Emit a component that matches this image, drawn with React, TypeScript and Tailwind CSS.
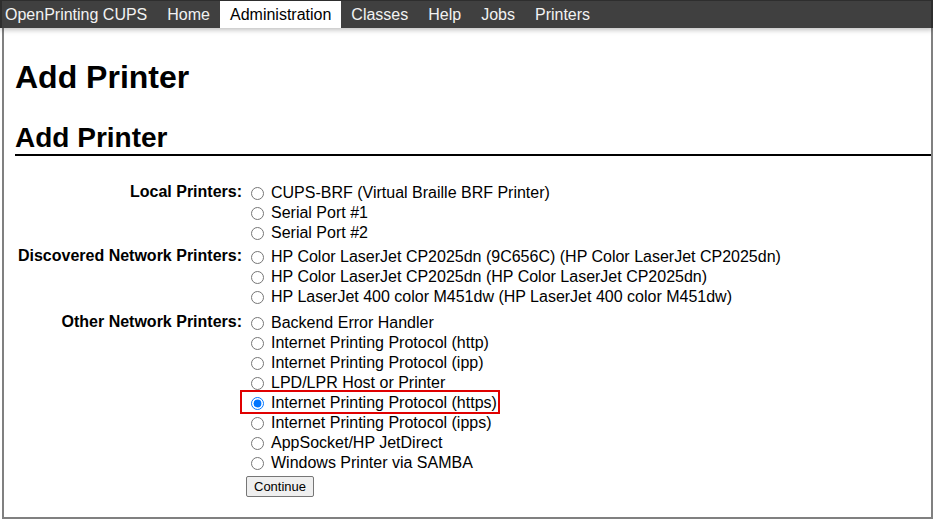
import React from 'react';

const groups = [
  {
    label: 'Local Printers:',
    gap: 'mt-0',
    options: ['CUPS-BRF (Virtual Braille BRF Printer)', 'Serial Port #1', 'Serial Port #2'],
  },
  {
    label: 'Discovered Network Printers:',
    gap: 'mt-[4px]',
    options: [
      'HP Color LaserJet CP2025dn (9C656C) (HP Color LaserJet CP2025dn)',
      'HP Color LaserJet CP2025dn (HP Color LaserJet CP2025dn)',
      'HP LaserJet 400 color M451dw (HP LaserJet 400 color M451dw)',
    ],
  },
  {
    label: 'Other Network Printers:',
    gap: 'mt-[6px]',
    options: [
      'Backend Error Handler',
      'Internet Printing Protocol (http)',
      'Internet Printing Protocol (ipp)',
      'LPD/LPR Host or Printer',
      'Internet Printing Protocol (https)',
      'Internet Printing Protocol (ipps)',
      'AppSocket/HP JetDirect',
      'Windows Printer via SAMBA',
    ],
  },
];

const navItems = ['Home', 'Administration', 'Classes', 'Help', 'Jobs', 'Printers'];

export default function App() {
  return (
    <div className="w-[933px] h-[520px] bg-white overflow-hidden font-['Liberation_Sans',Arial,sans-serif] text-black">
      <nav className="relative z-10 h-[28px] flex bg-[#404040] border-t-[1px] border-x-2 border-[#2e2e2e] shadow-[0_2px_5px_rgba(0,0,0,0.25)] text-[16px] leading-[27px]">
        <span className="pl-[3px] pr-[10px] text-[#f2f2f2]">OpenPrinting CUPS</span>
        {navItems.map(item => (
          <span
            key={item}
            className={
              item === 'Administration'
                ? 'px-[10px] bg-white text-black'
                : 'px-[10px] text-[#f2f2f2]'
            }
          >
            {item}
          </span>
        ))}
      </nav>

      <div className="ml-[2px] h-[491px] border-l-2 border-r-2 border-b-2 border-[#808080] pl-[11px] pt-[31px]">
        <h1 className="text-[32px] leading-[36px] font-bold">Add Printer</h1>
        <h2 className="mt-[27px] text-[28px] leading-[32px] font-bold border-b-2 border-black">Add Printer</h2>

        <div className="mt-[27px] text-[16px]">
          {groups.map((group, gi) => (
            <div key={group.label} className={`flex ${group.gap}`}>
              <div className="w-[227px] text-right font-bold leading-[18px]">{group.label}</div>
              <div className="pl-[4px]">
                {group.options.map(opt => {
                  const checked = opt === 'Internet Printing Protocol (https)';
                  return (
                    <div key={opt} className="relative h-[20px] flex items-center whitespace-nowrap">
                      {checked && (
                        <div className="absolute left-[-6px] top-[-3px] w-[260px] h-[24px] border-2 border-[#e00000]" />
                      )}
                      <input
                        type="radio"
                        name="device"
                        defaultChecked={checked}
                        className="ml-[5px] mr-[7px] w-[13px] h-[13px]"
                      />
                      <span className="leading-[20px]">{opt}</span>
                    </div>
                  );
                })}
                {gi === groups.length - 1 && (
                  <button className="mt-[3px] h-[21px] px-[7px] text-[13px] leading-[17px] bg-[#efefef] border border-[#767676] rounded-[2px]">
                    Continue
                  </button>
                )}
              </div>
            </div>
          ))}
        </div>
      </div>
    </div>
  );
}
